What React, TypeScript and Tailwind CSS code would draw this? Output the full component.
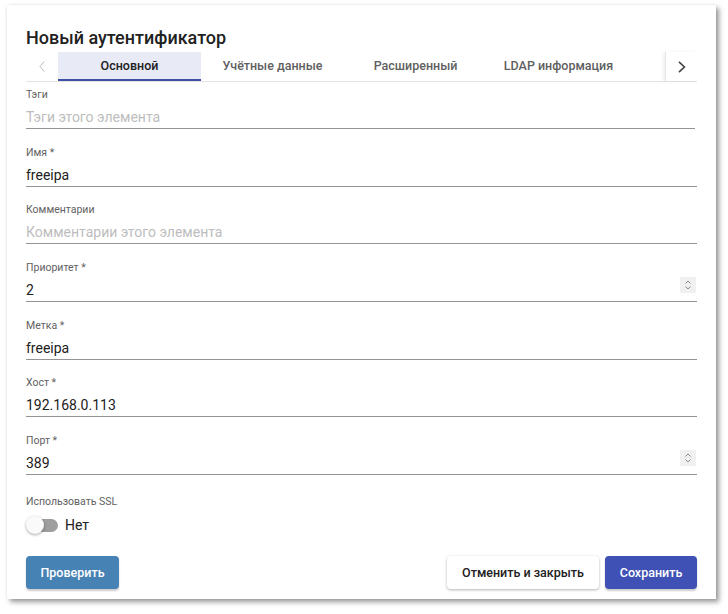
import React from 'react'

type Field = {
  label: string
  value?: string
  placeholder?: string
  number?: boolean
  narrow?: boolean
}

const fields: Field[] = [
  { label: 'Тэги', placeholder: 'Тэги этого элемента', narrow: true },
  { label: 'Имя *', value: 'freeipa' },
  { label: 'Комментарии', placeholder: 'Комментарии этого элемента' },
  { label: 'Приоритет *', value: '2', number: true },
  { label: 'Метка *', value: 'freeipa' },
  { label: 'Хост *', value: '192.168.0.113' },
  { label: 'Порт *', value: '389', number: true },
]

const tabs = ['Основной', 'Учётные данные', 'Расширенный', 'LDAP информация']

// native-looking number spinner
const Spinner = () => (
  <div className="absolute right-[1px] top-[-2px] flex h-[16px] w-[16px] items-center justify-center bg-[#f0f0f0]">
    <svg viewBox="0 0 16 16" className="h-[16px] w-[16px]" fill="none" stroke="#8a8a8a" strokeWidth="1">
      <path d="M5.5 6.5 L8 4 L10.5 6.5" />
      <path d="M5.5 9.5 L8 12 L10.5 9.5" />
    </svg>
  </div>
)

const TextField = ({ f }: { f: Field }) => (
  <div className={`flex flex-col ${f.narrow ? 'mr-[2px]' : ''}`}>
    <label className="h-[14px] text-[10.5px] leading-[14px] text-[#616161]">{f.label}</label>
    <div className="relative mt-[4px] h-[23px] border-b border-[#949494] pt-[1px]">
      {f.value ? (
        <span className="block text-[14px] leading-[20px] text-[#212121]">{f.value}</span>
      ) : (
        <span className="block text-[14px] leading-[20px] text-[#bdbdbd]">{f.placeholder}</span>
      )}
      {f.number ? <Spinner /> : null}
    </div>
  </div>
)

export default function App() {
  return (
    <div className="h-[614px] w-[728px] bg-white pl-[7px] pt-[5px] font-['Roboto',sans-serif]">
      <div className="flex h-[594px] w-[709px] flex-col bg-white px-[19px] pt-[21px] shadow-[3px_3px_5px_rgba(0,0,0,0.4),0_0_3px_rgba(0,0,0,0.08)]">
        <h2 className="text-[18px] font-medium leading-[24px] text-[#212121]">Новый аутентификатор</h2>

        {/* tab header with pagination arrows */}
        <div className="mt-[2px] flex h-[30px] border-b border-[#e3e3e3]">
          <div className="flex w-[32px] items-center justify-center">
            <svg viewBox="0 0 6 12" className="h-[11px] w-[6px]" fill="none" stroke="#b5b5b5" strokeWidth="1">
              <path d="M5.5 0.5 L0.8 6 L5.5 11.5" />
            </svg>
          </div>
          <div className="flex flex-1 overflow-hidden">
            {tabs.map((t, i) => (
              <div
                key={t}
                className={`relative flex w-[143px] shrink-0 items-center justify-center pb-[1px] text-[12.5px] font-medium ${
                  i === 0 ? 'bg-[#e8eaf6] text-[#212121]' : 'text-[#5f5f5f]'
                }`}
              >
                {t}
                {i === 0 ? <div className="absolute bottom-0 left-0 right-0 h-[2px] bg-[#3f4fa8]" /> : null}
              </div>
            ))}
          </div>
          <div className="flex w-[32px] items-center justify-center border-l border-[#e6e6e6] shadow-[-2px_0_3px_rgba(0,0,0,0.06)]">
            <svg viewBox="0 0 8 12" className="h-[12px] w-[8px]" fill="none" stroke="#424242" strokeWidth="1.6">
              <path d="M1 0.8 L6.4 6 L1 11.2" />
            </svg>
          </div>
        </div>

        <div className="mt-[6px] flex flex-col gap-[16.67px]">
          {fields.map((f) => (
            <TextField key={f.label} f={f} />
          ))}
        </div>

        <div className="mt-[20.5px] flex flex-col">
          <label className="h-[14px] text-[10.5px] leading-[14px] text-[#616161]">Использовать SSL</label>
          <div className="mt-[6px] flex h-[20px] items-center">
            <div className="relative h-[20px] w-[34px]">
              <div className="absolute left-[2px] top-[3.5px] h-[13px] w-[30px] rounded-full bg-[#9e9e9e]" />
              <div className="absolute left-0 top-[1px] h-[18px] w-[18px] rounded-full bg-[#fafafa] shadow-[0_1px_3px_rgba(0,0,0,0.35)]" />
            </div>
            <span className="ml-[5px] text-[14px] leading-[20px] text-[#212121]">Нет</span>
          </div>
        </div>

        <div className="mt-[21px] flex items-center">
          <button className="h-[33px] w-[93px] rounded-[4px] bg-[#4682b4] text-[12.5px] font-medium text-white shadow-[0_2px_2px_rgba(0,0,0,0.2)]">
            Проверить
          </button>
          <div className="flex-1" />
          <button className="h-[33px] w-[152px] rounded-[4px] bg-white text-[12.5px] font-medium text-[#212121] shadow-[0_1px_3px_rgba(0,0,0,0.3)]">
            Отменить и закрыть
          </button>
          <button className="ml-[6px] h-[33px] w-[92px] rounded-[4px] bg-[#3f51b5] text-[12.5px] font-medium text-white shadow-[0_2px_2px_rgba(0,0,0,0.2)]">
            Сохранить
          </button>
        </div>
      </div>
    </div>
  )
}
